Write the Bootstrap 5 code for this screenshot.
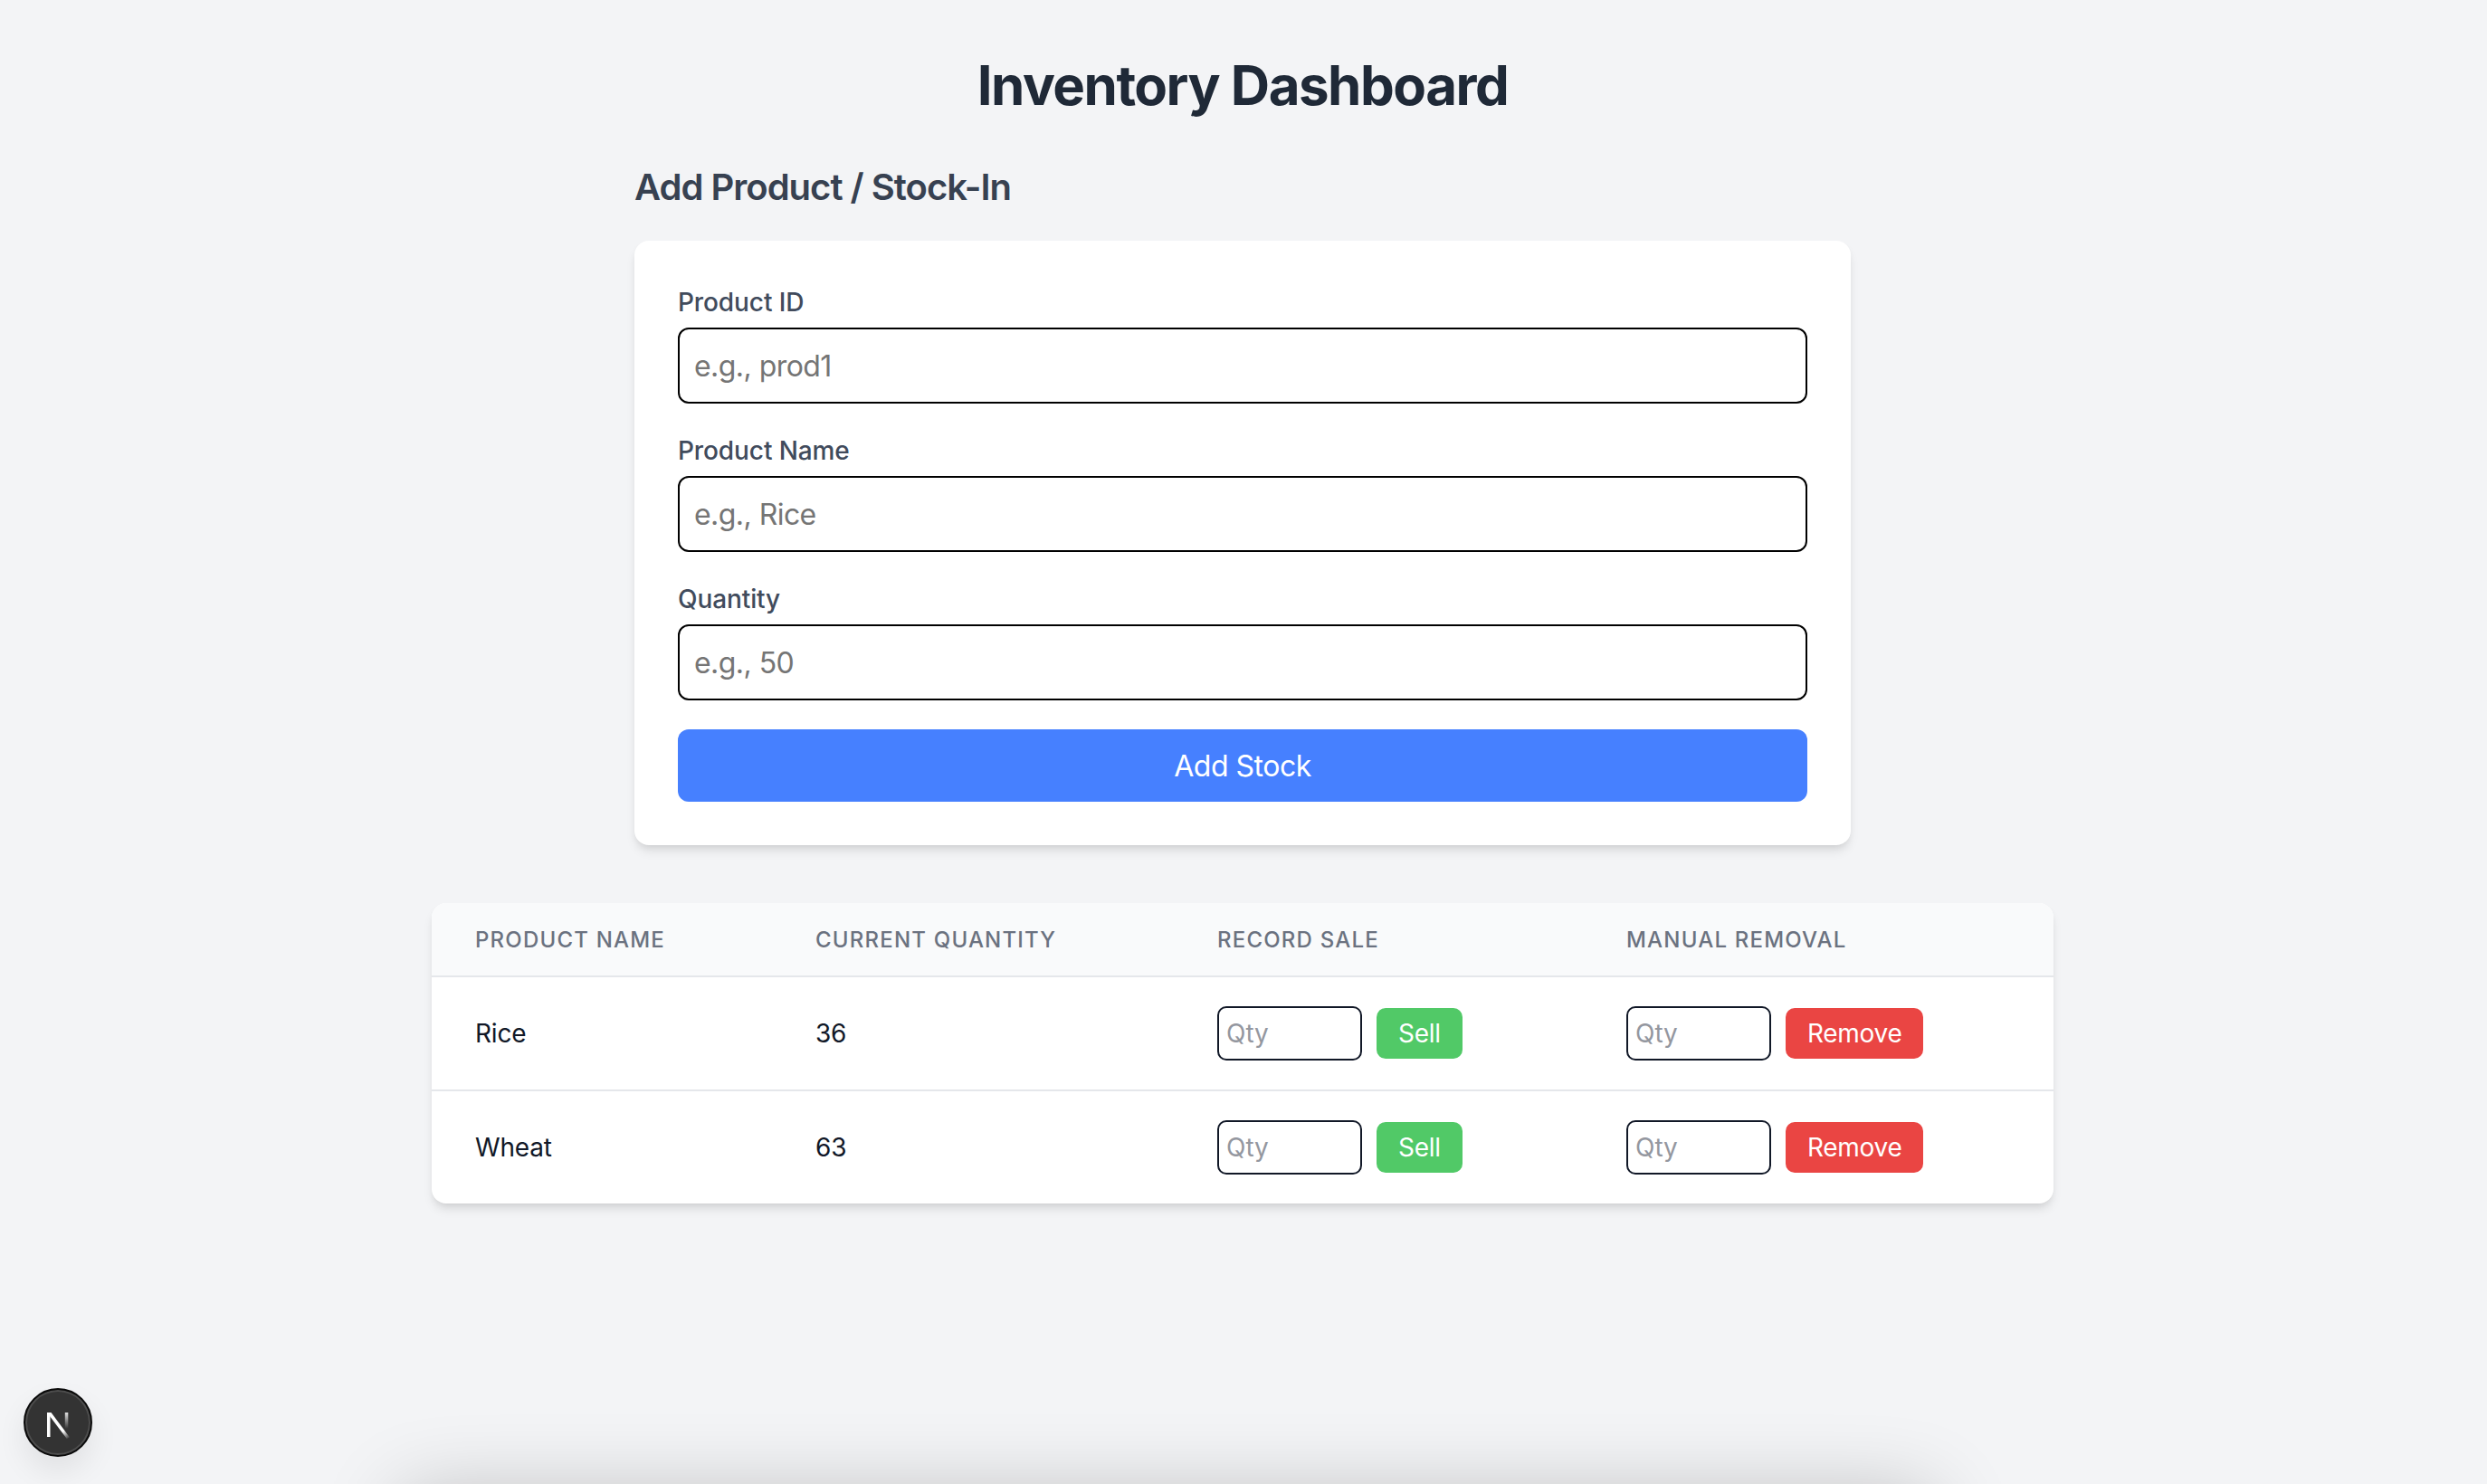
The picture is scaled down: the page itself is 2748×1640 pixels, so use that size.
<!DOCTYPE html>
<html lang="en">
<head>
    <meta charset="UTF-8">
    <meta name="viewport" content="width=device-width, initial-scale=1.0">
    <title>Inventory Dashboard</title>
    <link href="https://cdn.jsdelivr.net/npm/bootstrap@5.3.0/dist/css/bootstrap.min.css" rel="stylesheet">
    <style>
        html, body {
            height: 100%;
            overflow: hidden;
        }
        body {
            background-color: #f3f4f6;
            font-family: "Inter", "Liberation Sans", sans-serif;
            color: #111827;
            padding-right: 2px;
        }
        .page-title {
            font-size: 60px;
            line-height: 72px;
            font-weight: 700;
            letter-spacing: -1.5px;
            color: #1f2937;
            margin: 0 0 49px;
            padding-top: 58px;
            text-align: center;
        }
        .form-wrap {
            width: 1344px;
            margin: 0 auto;
        }
        .section-title {
            font-size: 40px;
            line-height: 56px;
            font-weight: 600;
            letter-spacing: -1px;
            color: #374151;
            margin-bottom: 31px;
        }
        .stock-card {
            border: 0;
            border-radius: 16px;
            padding: 48px;
            box-shadow: 0 8px 12px -2px rgba(0, 0, 0, .1), 0 4px 8px -4px rgba(0, 0, 0, .1);
        }
        .field-label {
            font-size: 28px;
            line-height: 40px;
            font-weight: 500;
            letter-spacing: -.1px;
            color: #414b5c;
            margin-bottom: 8px;
        }
        .field-input {
            height: 84px;
            font-size: 32px;
            letter-spacing: -.55px;
            padding: 1px 16px 0;
            border: 2px solid #000;
            border-radius: 12px;
            margin-bottom: 32px;
        }
        .field-input::placeholder {
            color: #757575;
        }
        .add-btn {
            display: block;
            width: 100%;
            height: 80px;
            margin-top: 32px;
            padding-top: 2px;
            font-size: 32px;
            letter-spacing: -.5px;
            color: #fff;
            background: #4680ff;
            border: 0;
            border-radius: 12px;
        }
        .stock-wrap {
            width: 1792px;
            margin: 64px auto 0;
            background: #fff;
            border-radius: 16px;
            overflow: hidden;
            box-shadow: 0 8px 12px -2px rgba(0, 0, 0, .1), 0 4px 8px -4px rgba(0, 0, 0, .1);
        }
        .stock-table {
            margin: 0;
            table-layout: fixed;
            font-size: 28px;
        }
        .stock-table th {
            height: 81px;
            padding: 2px 48px 0;
            font-size: 24px;
            font-weight: 500;
            letter-spacing: .05em;
            text-transform: uppercase;
            color: #6b7280;
            background: #f9fafb;
            border-bottom: 2px solid #e5e7eb;
            vertical-align: middle;
        }
        .stock-table td {
            height: 126px;
            padding: 0 48px;
            color: #111827;
            letter-spacing: -.2px;
            border-bottom: 2px solid #e5e7eb;
            vertical-align: middle;
        }
        .stock-table tr:last-child td {
            height: 125px;
            border-bottom: 0;
        }
        .col-name { width: 376px; }
        .col-current { width: 444px; }
        .col-sale { width: 452px; }
        .qty-input {
            width: 160px;
            height: 60px;
            padding: 0 8px;
            font-size: 28px;
            border: 2px solid #111827;
            border-radius: 10px;
        }
        .qty-input::placeholder {
            color: #94979f;
        }
        .row-btn {
            height: 56px;
            padding: 0 24px;
            font-size: 28px;
            letter-spacing: -.3px;
            line-height: 1;
            color: #fff;
            border: 0;
            border-radius: 10px;
        }
        .row-btn.sell { background: #51c967; }
        .row-btn.drop { background: #ea4543; }
        .dev-badge {
            position: fixed;
            left: 26px;
            top: 1534px;
            width: 76px;
            height: 76px;
            border-radius: 50%;
            background: #333;
            border: 2px solid #0a0a0a;
            box-shadow: inset 0 0 0 2px #4d4d4d, 0 16px 32px rgba(0, 0, 0, .08);
        }
        .fold-shadow {
            position: fixed;
            left: 445px;
            width: 1690px;
            top: 1654px;
            height: 100px;
            box-shadow: 0 0 90px rgba(0, 0, 0, .24);
        }
    </style>
</head>
<body>

<h1 class="page-title">Inventory Dashboard</h1>

<div class="form-wrap">
    <h2 class="section-title">Add Product / Stock-In</h2>
    <form class="card stock-card">
        <label class="field-label" for="pid">Product ID</label>
        <input class="form-control field-input" id="pid" placeholder="e.g., prod1">
        <label class="field-label" for="pname">Product Name</label>
        <input class="form-control field-input" id="pname" placeholder="e.g., Rice">
        <label class="field-label" for="pqty">Quantity</label>
        <input class="form-control field-input mb-0" id="pqty" placeholder="e.g., 50">
        <button type="button" class="add-btn">Add Stock</button>
    </form>
</div>

<div class="stock-wrap">
    <table class="table stock-table">
        <thead>
            <tr>
                <th class="col-name">Product Name</th>
                <th class="col-current">Current Quantity</th>
                <th class="col-sale">Record Sale</th>
                <th>Manual Removal</th>
            </tr>
        </thead>
        <tbody>
            <tr>
                <td>Rice</td>
                <td>36</td>
                <td><div class="d-flex align-items-center gap-3"><input class="form-control qty-input" placeholder="Qty"><button type="button" class="row-btn sell">Sell</button></div></td>
                <td><div class="d-flex align-items-center gap-3"><input class="form-control qty-input" placeholder="Qty"><button type="button" class="row-btn drop">Remove</button></div></td>
            </tr>
            <tr>
                <td>Wheat</td>
                <td>63</td>
                <td><div class="d-flex align-items-center gap-3"><input class="form-control qty-input" placeholder="Qty"><button type="button" class="row-btn sell">Sell</button></div></td>
                <td><div class="d-flex align-items-center gap-3"><input class="form-control qty-input" placeholder="Qty"><button type="button" class="row-btn drop">Remove</button></div></td>
            </tr>
        </tbody>
    </table>
</div>

<div class="fold-shadow"></div>
<div class="dev-badge d-flex align-items-center justify-content-center">
    <svg width="28" height="36" viewBox="0 0 28 36">
        <defs>
            <linearGradient id="nfade1" gradientUnits="userSpaceOnUse" x1="2" y1="7" x2="26" y2="36">
                <stop offset="0.72" stop-color="#fff"/>
                <stop offset="1" stop-color="#fff" stop-opacity="0"/>
            </linearGradient>
            <linearGradient id="nfade2" x1="0" y1="0" x2="0" y2="1">
                <stop offset="0" stop-color="#fff" stop-opacity=".85"/>
                <stop offset="1" stop-color="#fff" stop-opacity="0"/>
            </linearGradient>
        </defs>
        <rect x="2" y="7" width="3.5" height="27" fill="#fff"/>
        <path d="M2 7h4.5L27 34.5l-3.2 1.5z" fill="url(#nfade1)"/>
        <rect x="21.8" y="7" width="3.5" height="18" fill="url(#nfade2)"/>
    </svg>
</div>

</body>
</html>
